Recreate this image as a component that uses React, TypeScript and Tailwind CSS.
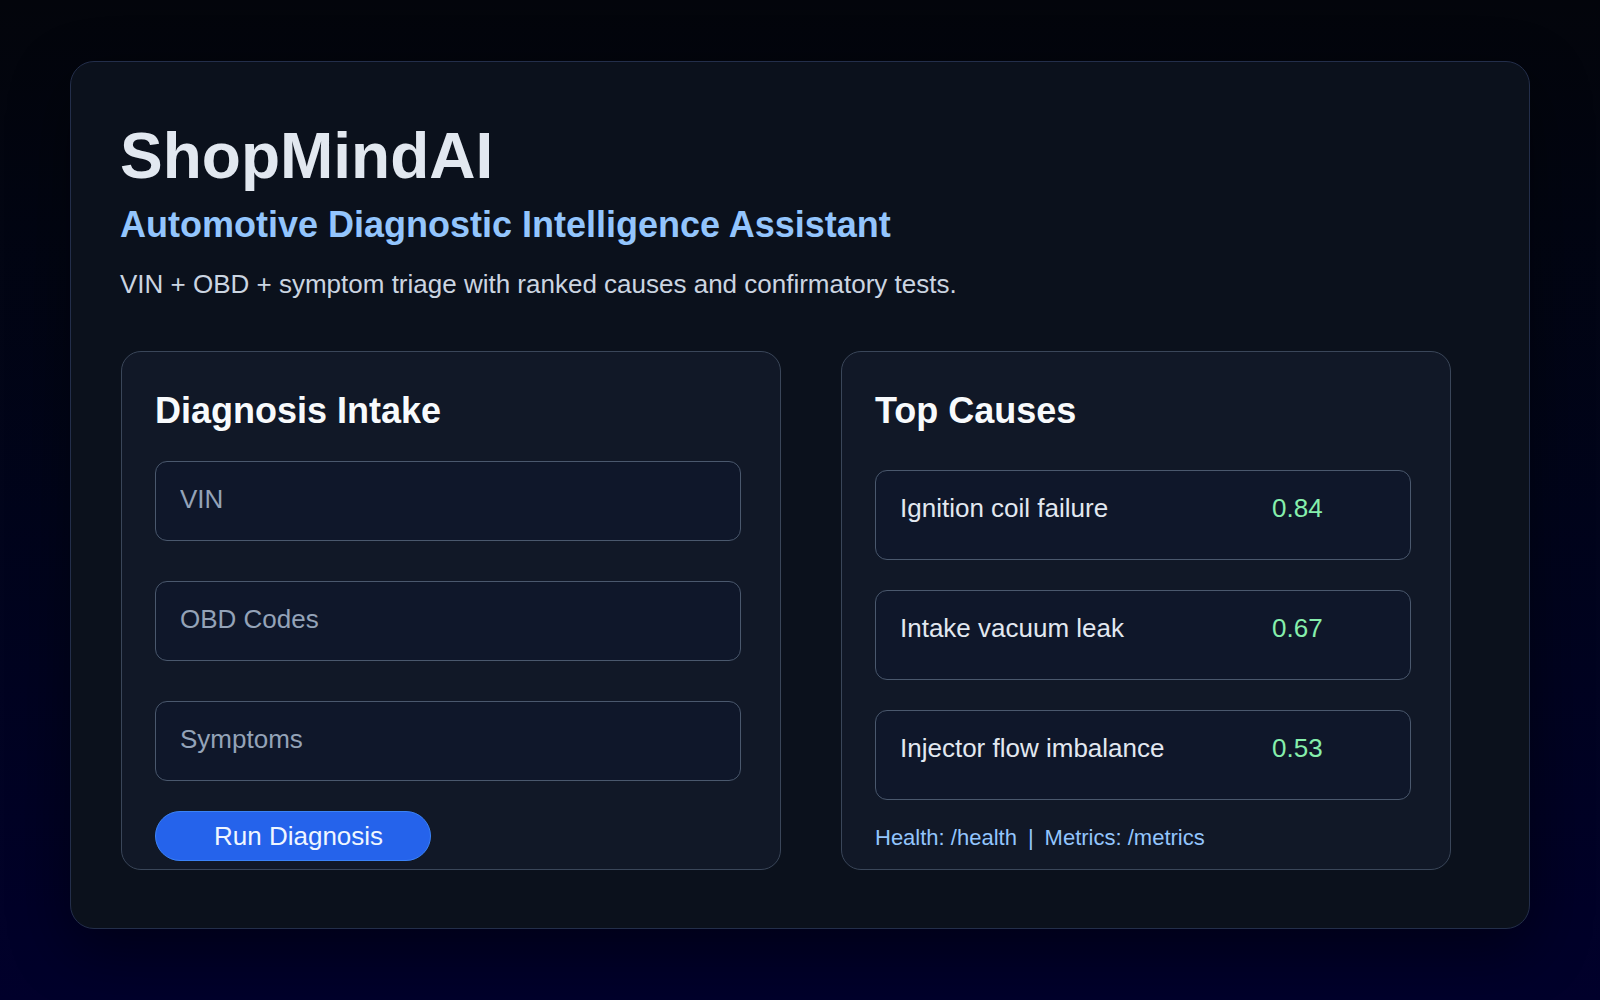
import React from "react";

const causes = [
  { name: "Ignition coil failure", score: "0.84" },
  { name: "Intake vacuum leak", score: "0.67" },
  { name: "Injector flow imbalance", score: "0.53" },
];

export default function App() {
  return (
    <div
      className="min-h-screen w-full bg-gradient-to-b from-[#03050b] to-[#01002b] pt-[61px] pb-[71px]"
      style={{ fontFamily: '"Liberation Sans", Arial, sans-serif' }}
    >
      <div className="mx-auto w-[1460px] rounded-[24px] border-[1.5px] border-[#232e4a] bg-[#0b111c] pt-[58px] pb-[58px] pl-[50px] pr-[48px] shadow-[0_20px_60px_rgba(0,0,0,0.45)]">
        <h1 className="text-[64px] leading-[72px] font-bold text-[#e2e8f0] -ml-[1px]">ShopMindAI</h1>
        <h2 className="mt-[11px] text-[36px] leading-[43px] font-bold text-[#93c5fd] -ml-[1px]">
          Automotive Diagnostic Intelligence Assistant
        </h2>
        <p className="mt-[19px] text-[26px] leading-[39px] text-[#cbd5e1] -ml-[1px]">
          VIN + OBD + symptom triage with ranked causes and confirmatory tests.
        </p>

        <div className="mt-[47px] flex gap-[60px]">
          {/* Left panel */}
          <section className="h-[519px] w-[660px] rounded-[20px] border border-[#3a4659] bg-[#111827] pt-[37px] pl-[33px] pr-[39px]">
            <h3 className="text-[36px] leading-[43px] font-bold text-[#f8fafc]">Diagnosis Intake</h3>
            <div className="mt-[29px] flex flex-col gap-[40px]">
              {["VIN", "OBD Codes", "Symptoms"].map((p) => (
                <input
                  key={p}
                  placeholder={p}
                  className="h-[80px] w-[586px] rounded-[12px] border border-[#4a586d] bg-[#0f172a] px-[24px] pb-[4px] text-[26px] text-[#e2e8f0] placeholder:text-[#94a3b8] outline-none"
                  style={{ fontFamily: '"Liberation Sans", Arial, sans-serif' }}
                />
              ))}
            </div>
            <button
              className="mt-[30px] flex h-[50px] w-[276px] items-center rounded-full border border-[#3b82f6] bg-[#2563eb] pl-[58px] text-[26px] text-[#eff6ff]"
              style={{ fontFamily: '"Liberation Sans", Arial, sans-serif' }}
            >
              Run Diagnosis
            </button>
          </section>

          {/* Right panel */}
          <section className="h-[519px] w-[610px] rounded-[20px] border border-[#3a4659] bg-[#111827] pt-[37px] pl-[33px] pr-[39px]">
            <h3 className="text-[36px] leading-[43px] font-bold text-[#f8fafc]">Top Causes</h3>
            <div className="mt-[38px] flex flex-col gap-[30px]">
              {causes.map((c) => (
                <div
                  key={c.name}
                  className="grid h-[90px] w-[536px] grid-cols-[370px_1fr] rounded-[12px] border border-[#4a586d] bg-[#0f172a] pt-[18px] pl-[24px] text-[26px] leading-[39px]"
                >
                  <span className="text-[#e2e8f0]">{c.name}</span>
                  <span className="pl-[2px] text-[#86efac]">{c.score}</span>
                </div>
              ))}
            </div>
            <p className="mt-[21px] text-[22px] leading-[33px] text-[#93c5fd]">
              Health: /health<span className="mx-[11px]">|</span>Metrics: /metrics
            </p>
          </section>
        </div>
      </div>
    </div>
  );
}
